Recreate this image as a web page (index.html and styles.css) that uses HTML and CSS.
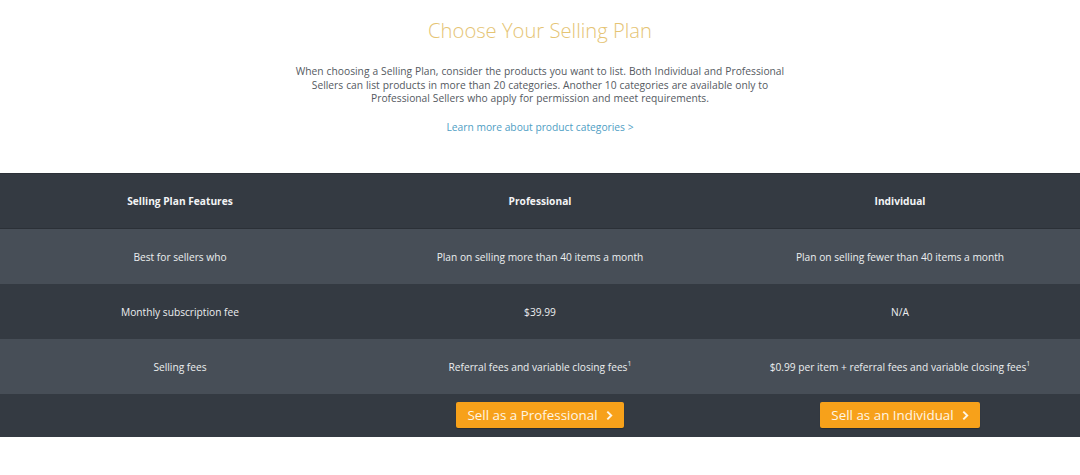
FILE: index.html
```html
<!DOCTYPE html>
<html lang="en">
<head>
<meta charset="utf-8">
<title>Choose Your Selling Plan</title>
<link rel="stylesheet" href="styles.css">
</head>
<body>
<section class="intro">
  <h1 class="title">Choose Your Selling Plan</h1>
  <p class="lead">When choosing a Selling Plan, consider the products you want to list. Both Individual and Professional Sellers can list products in more than 20 categories. Another 10 categories are available only to Professional Sellers who apply for permission and meet requirements.</p>
  <a class="learn" href="#">Learn more about product categories &gt;</a>
</section>
<div class="plans">
  <div class="row head">
    <div class="cell">Selling Plan Features</div>
    <div class="cell">Professional</div>
    <div class="cell">Individual</div>
  </div>
  <div class="row alt">
    <div class="cell">Best for sellers who</div>
    <div class="cell">Plan on selling more than 40 items a month</div>
    <div class="cell">Plan on selling fewer than 40 items a month</div>
  </div>
  <div class="row">
    <div class="cell">Monthly subscription fee</div>
    <div class="cell">$39.99</div>
    <div class="cell">N/A</div>
  </div>
  <div class="row alt">
    <div class="cell">Selling fees</div>
    <div class="cell">Referral fees and variable closing fees<sup>1</sup></div>
    <div class="cell">$0.99 per item + referral fees and variable closing fees<sup>1</sup></div>
  </div>
  <div class="row actions">
    <div class="cell"></div>
    <div class="cell"><a class="btn" href="#">Sell as a Professional <svg class="chev" viewBox="0 0 8 12" width="7" height="11"><path d="M1.5 1.5 L6 6 L1.5 10.5" fill="none" stroke="currentColor" stroke-width="2.2"/></svg></a></div>
    <div class="cell"><a class="btn" href="#">Sell as an Individual <svg class="chev" viewBox="0 0 8 12" width="7" height="11"><path d="M1.5 1.5 L6 6 L1.5 10.5" fill="none" stroke="currentColor" stroke-width="2.2"/></svg></a></div>
  </div>
</div>
</body>
</html>
```
FILE: styles.css
```css
html, body {
  margin: 0;
  padding: 0;
  background: #ffffff;
  font-family: "Open Sans", "Noto Sans", sans-serif;
}
.intro {
  display: flex;
  flex-direction: column;
  align-items: center;
  padding-top: 15px;
  height: 158px;
  box-sizing: content-box;
}
.title {
  margin: 0;
  font-size: 20.2px;
  font-weight: 300;
  color: #e5c474;
  line-height: 30px;
}
.lead {
  margin: 20px 0 0;
  width: 500px;
  text-align: center;
  font-size: 10.25px;
  line-height: 13.6px;
  color: #555a5f;
  word-spacing: 0.3px;
}
.learn {
  margin-top: 14px;
  font-size: 10.25px;
  color: #4f9ec4;
  text-decoration: none;
}
.plans {
  background: #343a42;
  border-top: 1px solid #2c3138;
}
.row {
  display: grid;
  grid-template-columns: 1fr 1fr 1fr;
  height: 55px;
  align-items: center;
  background: #343a42;
  box-sizing: border-box;
}
.row.alt {
  background: #474e57;
}
.row.head {
  border-bottom: 1px solid #2b3037;
  height: 55px;
}
.cell {
  text-align: center;
  font-size: 10.2px;
  color: #eceef0;
}
.head .cell {
  font-weight: 700;
  color: #f3f4f5;
}
sup {
  font-size: 7px;
  line-height: 0;
  vertical-align: 5px;
}
.row.actions {
  height: 43px;
  align-items: start;
  padding-top: 8px;
}
.btn {
  display: inline-flex;
  align-items: center;
  gap: 8px;
  height: 26px;
  padding: 0 11px 0 11px;
  background: #f7a11a;
  border-radius: 2px;
  color: #fff6e4;
  font-size: 13.4px;
  text-decoration: none;
  box-shadow: 0 1px 1px rgba(0,0,0,0.25);
}
.chev {
  display: block;
  color: #fff6e4;
}
```
